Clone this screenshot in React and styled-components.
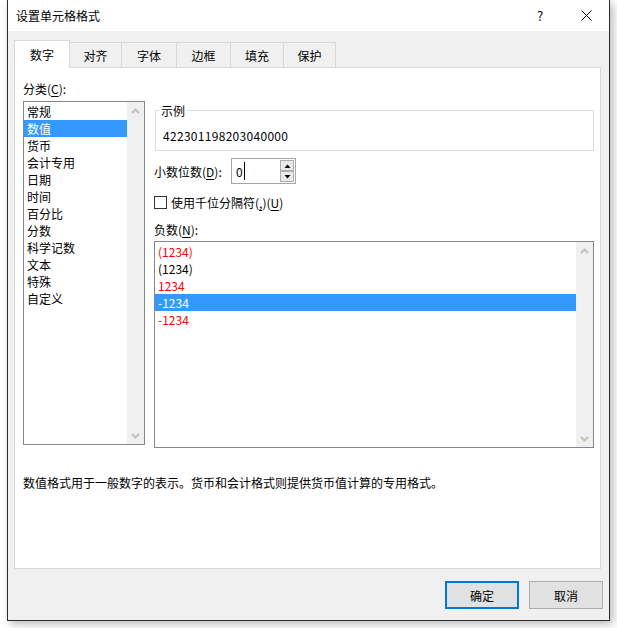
import React from 'react';
import styled, { createGlobalStyle } from 'styled-components';

const GlobalStyle = createGlobalStyle`
  html, body {
    margin: 0;
    background: #fff;
  }
  body {
    font-family: "Noto Sans CJK SC", "Noto Sans", sans-serif;
    font-size: 12px;
    color: #000;
  }
  u {
    text-decoration-thickness: 1px;
    text-underline-offset: 2px;
  }
`;

const Page = styled.div`
  padding-left: 7px;
  width: 617px;
  height: 628px;
  box-sizing: border-box;
`;

const Window = styled.div`
  width: 603px;
  height: 621px;
  box-sizing: border-box;
  border: 1px solid #2b2b2b;
  border-top: none;
  background: #f0f0f0;
  display: flex;
  flex-direction: column;
  box-shadow: 3px 3px 9px rgba(0, 0, 0, 0.28);
`;

const TitleBar = styled.div`
  height: 31px;
  flex: none;
  background: #fff;
  display: flex;
  align-items: center;
  padding-left: 8px;
`;

const Title = styled.div`
  flex: 1;
  line-height: 17px;
`;

const CaptionButton = styled.div`
  width: 46px;
  height: 31px;
  display: flex;
  align-items: center;
  justify-content: center;
  font-size: 13px;
`;

const Body = styled.div`
  flex: 1;
  padding: 9px 8px 0 6px;
  display: flex;
  flex-direction: column;
`;

const TabRow = styled.div`
  display: flex;
  align-items: flex-end;
  height: 27px;
`;

const Tab = styled.div`
  position: relative;
  box-sizing: border-box;
  width: ${p => p.$w}px;
  height: ${p => (p.$active ? 28 : 25)}px;
  margin-bottom: ${p => (p.$active ? -1 : 0)}px;
  margin-left: ${p => (p.$first ? 0 : -1)}px;
  background: ${p => (p.$active ? '#fff' : '#f0f0f0')};
  border: 1px solid #d9d9d9;
  border-bottom: none;
  z-index: ${p => (p.$active ? 1 : 0)};
  display: flex;
  align-items: center;
  justify-content: center;
  line-height: 17px;
  padding-bottom: ${p => (p.$active ? 1 : 0)}px;
`;

const Panel = styled.div`
  height: 502px;
  box-sizing: border-box;
  background: #fff;
  border: 1px solid #d9d9d9;
  padding: 12px 6px 0 8px;
  display: flex;
  flex-direction: column;
`;

const Columns = styled.div`
  display: flex;
  gap: 9px;
  align-items: flex-start;
`;

const LeftCol = styled.div`
  width: 122px;
  display: flex;
  flex-direction: column;
`;

const RightCol = styled.div`
  width: 440px;
  display: flex;
  flex-direction: column;
`;

const Label = styled.div`
  line-height: 17px;
  margin-top: ${p => p.$mt || 0}px;
  margin-bottom: ${p => p.$mb || 0}px;
`;

const ListBox = styled.div`
  height: ${p => p.$h}px;
  box-sizing: border-box;
  border: 1px solid #828790;
  display: flex;
  background: #fff;
`;

const Items = styled.div`
  flex: 1;
  padding-top: 1px;
`;

const Item = styled.div`
  height: 17px;
  line-height: 17px;
  padding-left: 3px;
  white-space: nowrap;
  background: ${p => (p.$selected ? '#3399ff' : 'transparent')};
  color: ${p => (p.$selected ? '#fff' : p.$red ? '#ff0000' : '#000')};
`;

const ScrollBar = styled.div`
  width: 17px;
  background: #f0f0f0;
  display: flex;
  flex-direction: column;
  justify-content: space-between;
`;

const Arrow = styled.div`
  height: 17px;
  display: flex;
  align-items: center;
  justify-content: center;
`;

const GroupBox = styled.div`
  position: relative;
  margin: 30px 0 0 1px;
  height: 41px;
  box-sizing: border-box;
  border: 1px solid #dcdcdc;
  padding: 16px 0 0 7px;
  line-height: 17px;
`;

const Legend = styled.span`
  position: absolute;
  top: -9px;
  left: 3px;
  padding: 0 2px;
  background: #fff;
  line-height: 17px;
`;

const Sample = styled.span`
  letter-spacing: 0.3px;
`;

const SpinRow = styled.div`
  margin-top: 7px;
  height: 26px;
  display: flex;
  align-items: center;
`;

const SpinLabel = styled.div`
  width: 77px;
  line-height: 17px;
`;

const SpinInput = styled.div`
  width: 65px;
  height: 26px;
  box-sizing: border-box;
  border: 1px solid #a6a6a6;
  display: flex;
  align-items: center;
  padding: 0 1px 0 4px;
`;

const InputText = styled.div`
  flex: 1;
  display: flex;
  align-items: center;
  line-height: 17px;
`;

const Caret = styled.span`
  display: inline-block;
  width: 1px;
  height: 18px;
  background: #000;
  margin-left: 1px;
`;

const SpinButtons = styled.div`
  width: 14px;
  display: flex;
  flex-direction: column;
`;

const SpinButton = styled.div`
  height: 11px;
  box-sizing: border-box;
  border: 1px solid #adadad;
  margin-top: ${p => (p.$down ? -0 : 0)}px;
  background: #e9e9e9;
  display: flex;
  align-items: center;
  justify-content: center;
`;

const CheckRow = styled.div`
  margin-top: 10px;
  height: 17px;
  display: flex;
  align-items: center;
  gap: 4px;
  line-height: 17px;
`;

const CheckBox = styled.div`
  width: 13px;
  height: 13px;
  box-sizing: border-box;
  border: 1px solid #333;
  background: #fff;
`;

const Description = styled.div`
  margin-top: 26px;
  line-height: 17px;
`;

const ButtonRow = styled.div`
  margin: 12px -2px 0 0;
  display: flex;
  justify-content: flex-end;
  gap: 10px;
`;

const Button = styled.div`
  width: 74px;
  height: 28px;
  box-sizing: border-box;
  background: #e1e1e1;
  border: ${p => (p.$default ? '2px solid #0078d7' : '1px solid #adadad')};
  display: flex;
  align-items: center;
  justify-content: center;
  line-height: 17px;
`;

const Chevron = ({ up }) => (
  <svg width="9" height="6" viewBox="0 0 9 6">
    <path
      d={up ? 'M1 5 L4.5 1.5 L8 5' : 'M1 1 L4.5 4.5 L8 1'}
      fill="none"
      stroke="#c2c2c2"
      strokeWidth="2"
    />
  </svg>
);

const Triangle = ({ up }) => (
  <svg width="7" height="4" viewBox="0 0 7 4">
    <path d={up ? 'M0.5 4 L3.5 0.5 L6.5 4 Z' : 'M0.5 0 L3.5 3.5 L6.5 0 Z'} fill="#000" />
  </svg>
);

const CloseIcon = () => (
  <svg width="11" height="11" viewBox="0 0 11 11">
    <path d="M0.5 0.5 L10.5 10.5 M10.5 0.5 L0.5 10.5" stroke="#000" strokeWidth="1" />
  </svg>
);

const tabs = [
  { name: '数字', w: 56 },
  { name: '对齐', w: 53 },
  { name: '字体', w: 56 },
  { name: '边框', w: 55 },
  { name: '填充', w: 54 },
  { name: '保护', w: 53 },
];

const categories = ['常规', '数值', '货币', '会计专用', '日期', '时间', '百分比', '分数', '科学记数', '文本', '特殊', '自定义'];

const negatives = [
  { text: '(1234)', red: true },
  { text: '(1234)' },
  { text: '1234', red: true },
  { text: '-1234', selected: true },
  { text: '-1234', red: true },
];

const Scroll = () => (
  <ScrollBar>
    <Arrow><Chevron up /></Arrow>
    <Arrow><Chevron /></Arrow>
  </ScrollBar>
);

export default function App() {
  return (
    <Page>
      <GlobalStyle />
      <Window>
        <TitleBar>
          <Title>设置单元格格式</Title>
          <CaptionButton>?</CaptionButton>
          <CaptionButton><CloseIcon /></CaptionButton>
        </TitleBar>
        <Body>
          <TabRow>
            {tabs.map((t, i) => (
              <Tab key={t.name} $w={t.w} $active={i === 0} $first={i === 0}>
                {t.name}
              </Tab>
            ))}
          </TabRow>
          <Panel>
            <Columns>
              <LeftCol>
                <Label $mb={4}>分类(<u>C</u>):</Label>
                <ListBox $h={344}>
                  <Items>
                    {categories.map((c, i) => (
                      <Item key={c} $selected={i === 1}>{c}</Item>
                    ))}
                  </Items>
                  <Scroll />
                </ListBox>
              </LeftCol>
              <RightCol>
                <GroupBox>
                  <Legend>示例</Legend>
                  <Sample>422301198203040000</Sample>
                </GroupBox>
                <SpinRow>
                  <SpinLabel>小数位数(<u>D</u>):</SpinLabel>
                  <SpinInput>
                    <InputText>0<Caret /></InputText>
                    <SpinButtons>
                      <SpinButton><Triangle up /></SpinButton>
                      <SpinButton $down><Triangle /></SpinButton>
                    </SpinButtons>
                  </SpinInput>
                </SpinRow>
                <CheckRow>
                  <CheckBox />
                  <span>使用千位分隔符(<u>,</u>)(<u>U</u>)</span>
                </CheckRow>
                <Label $mt={10} $mb={3}>负数(<u>N</u>):</Label>
                <ListBox $h={207}>
                  <Items>
                    {negatives.map((n, i) => (
                      <Item key={i} $red={n.red} $selected={n.selected}>{n.text}</Item>
                    ))}
                  </Items>
                  <Scroll />
                </ListBox>
              </RightCol>
            </Columns>
            <Description>数值格式用于一般数字的表示。货币和会计格式则提供货币值计算的专用格式。</Description>
          </Panel>
          <ButtonRow>
            <Button $default>确定</Button>
            <Button>取消</Button>
          </ButtonRow>
        </Body>
      </Window>
    </Page>
  );
}
